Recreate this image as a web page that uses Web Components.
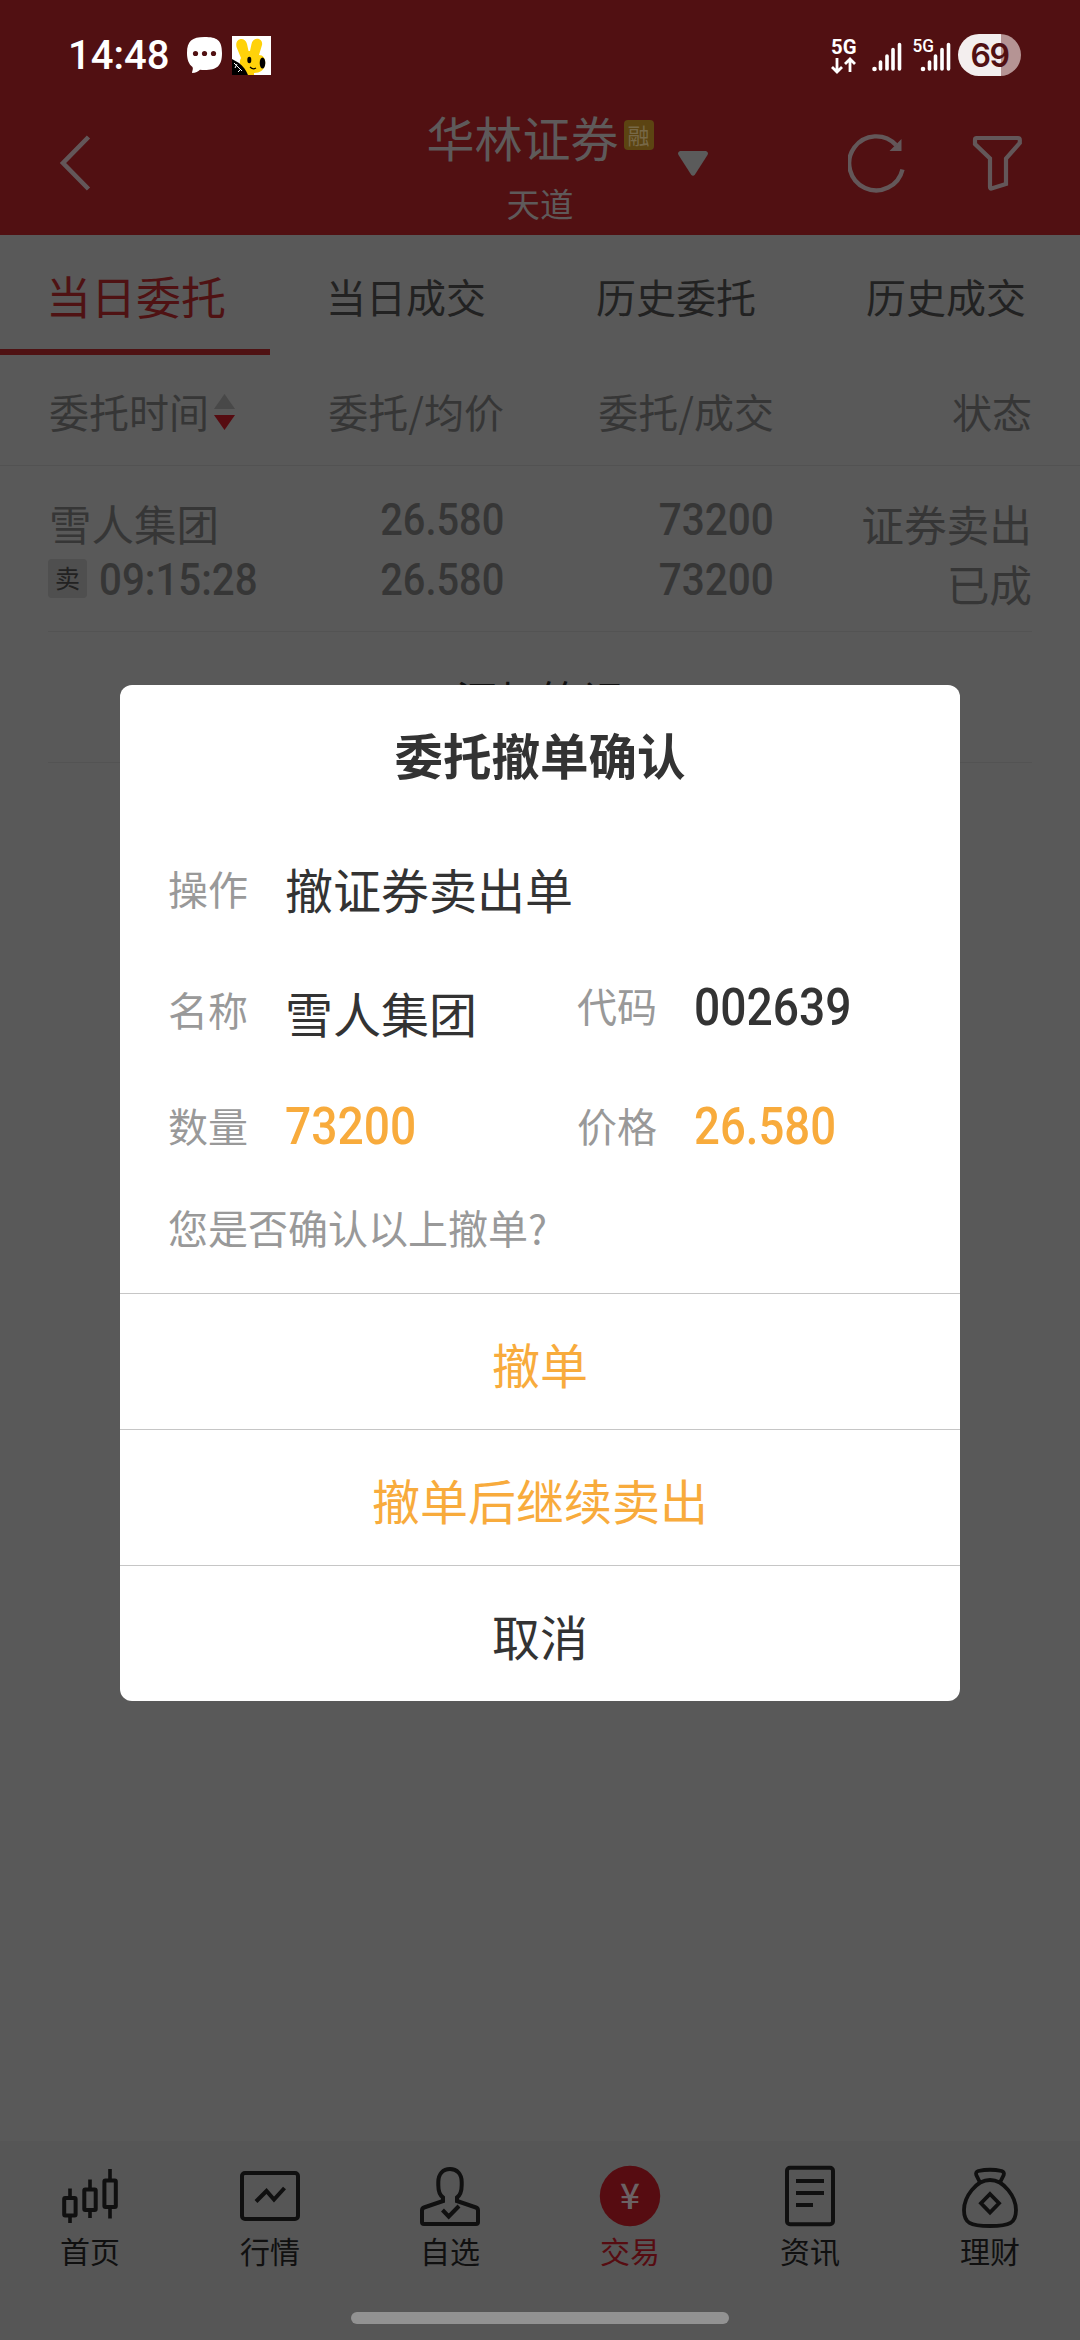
<!DOCTYPE html>
<html lang="zh-CN">
<head>
<meta charset="UTF-8">
<title>当日委托</title>
<style>
    body {
        margin: 0;
        width: 1080px;
        height: 2340px;
        overflow: hidden;
        background: #595959;
        font-family: "Noto Sans CJK SC", sans-serif;
    }
</style>
</head>
<body>
<trade-app></trade-app>

<script>
const ICONS = {
    home: `<g fill="none" stroke="currentColor" stroke-width="4"><rect x="6.2" y="33" width="11.4" height="17.5" rx="1"/><rect x="26.3" y="24.5" width="11.4" height="20.5" rx="1"/><rect x="46.4" y="15.5" width="11.4" height="26.5" rx="1"/><path d="M12 23.5v9M12 51v7M32 14.5v9M32 46v7M52 4v11M52 42v11.500" stroke-width="3.6"/></g>`,
    market: `<g fill="none" stroke="currentColor" stroke-width="4"><rect x="4" y="8" width="56" height="46" rx="3"/><path d="M18 36.500L28.500 26l7.500 8.500L46.500 23"/></g>`,
    user: `<path d="M25 37v-4.500C21.500 30 20.300 26.500 20.300 20v-3C20.300 9 25 4 32 4s11.700 5 11.700 13v3c0 6.500-1.200 10-4.700 12.500V37M26.500 35.500L6 42.500q-2 .7-2 3V57q0 2 2 2h52q2 0 2-2V45.500q0-2.300-2-3L37.500 35.500M24.500 45l6.200 6.500L41 41" fill="none" stroke="currentColor" stroke-width="4"/>`,
    trade: `<circle cx="32" cy="31" r="30.200" fill="currentColor"/><text x="32" y="44" text-anchor="middle" font-size="35" font-weight="500" fill="#6b6264" font-family="Noto Sans CJK SC">¥</text>`,
    news: `<g fill="none" stroke="currentColor" stroke-width="4"><rect x="9" y="2.800" width="46" height="56.500" rx="3"/><path d="M18 16h28M18 28h28M18 40h17"/></g>`,
    wealth: `<g fill="none" stroke="currentColor" stroke-width="3.800"><path d="M22 17.500L18.300 10q-1-3 2-4 11.700-2.500 23.400 0 3 1 2 4L42 17.500"/><path d="M32 15C18 15 6 32 6 45c0 13 6 16 26 16s26-3 26-16C58 32 46 15 32 15z"/><path d="M32 29l9 9.300-9 9.300-9-9.300z"/></g>`
};

class StatusBar extends HTMLElement {
    constructor() {
        super();
        this.attachShadow({mode: 'open'});
    }

    connectedCallback() {
        this.shadowRoot.innerHTML = `
        <style>
            :host {
                display: flex;
                justify-content: space-between;
                height: 80px;
                padding: 30px 59px 0 68px;
                box-sizing: border-box;
                background: #511012;
                color: #fff;
                font-family: Roboto, sans-serif;
            }

            .side {
                display: flex;
                align-items: center;
                height: 50px;
            }

            .time {
                font-size: 40px;
                font-weight: 500;
                line-height: 52px;
                padding-top: 1px;
                width: 118px;
            }

            .bunny {
                margin-left: 9px;
            }

            .battery {
                width: 63px;
                height: 42px;
                margin-left: 7px;
                border-radius: 21px;
                background: linear-gradient(90deg, #f3eeee 43px, #b59494 43px);
                color: #511012;
                font-family: Inter, sans-serif;
                font-size: 32px;
                font-weight: 600;
                line-height: 43px;
                letter-spacing: -1.500px;
                text-align: center;
            }
        </style>
        <div class="side">
            <span class="time">14:48</span>
            <svg width="37" height="38" viewBox="0 0 37 38">
                <path d="M18.500 1C6 1 1 5 1 17c0 6 1.500 11 5.500 14 1 2-.5 4-.5 6 4 0 6-1.500 8-3.300 1.500.3 3 .3 4.500.3C31 34 36 30 36 17S31 1 18.500 1z" fill="#fff"/>
                <g fill="#511012"><circle cx="9.500" cy="17.500" r="2.600"/><circle cx="18.500" cy="17.500" r="2.600"/><circle cx="27.500" cy="17.500" r="2.600"/></g>
            </svg>
            <svg class="bunny" width="39" height="39" viewBox="0 0 39 39">
                <path d="M0 0h39v39H0z" fill="#fff"/>
                <path d="M4.500 11C2.500 2 13 0 15 8l1.500 7h1.500L19.500 8c1.500-8 12-6 10.500 1l-3 10c5 0 7 5 6 10-1 5-5 8-11 8v2h-6C9 33 6 27 9 22z" fill="#ffd20a"/>
                <path d="M0 23l7 4c4 3 7 7 9 12H0z"/>
                <path d="M2 27l4 4M5 28l-2 4M6 31l4 4M9 33l-3 3" stroke="#fff" stroke-width="1"/>
                <ellipse cx="17.300" cy="24" rx="2" ry="3.300"/><ellipse cx="30.500" cy="27" rx="2.800" ry="5.500"/>
                <path d="M18 31q3 3 6 1" fill="none" stroke="#000" stroke-width="1.200"/>
            </svg>
        </div>
        <div class="side">
            <svg width="120" height="42" viewBox="830 34 120 42" fill="#fff" font-family="Roboto" font-weight="700">
                <text x="830" y="53.500" font-size="21" textLength="25.500" lengthAdjust="spacingAndGlyphs">5G</text>
                <path d="M836 58v13M831 67l5 5 5-5M849 72V59M844 64l5-5 5 5" fill="none" stroke="#fff" stroke-width="2.800"/>
                <circle cx="873.500" cy="69" r="2.300"/>
                <path d="M879.500 62v7M886 56v13M892 49.500v19.500M898.500 44.500v24.500" stroke="#fff" stroke-width="3.600" stroke-linecap="round"/>
                <text x="911.500" y="51.500" font-size="18" font-weight="500" textLength="21.500" lengthAdjust="spacingAndGlyphs">5G</text>
                <circle cx="922" cy="69" r="2.300"/>
                <path d="M928.500 62v7M934.500 56v13M941 49.500v19.500M947.500 44.500v24.500" stroke="#fff" stroke-width="3.600" stroke-linecap="round"/>
            </svg>
            <div class="battery">69</div>
        </div>
        `;
    }
}

class AppHeader extends HTMLElement {
    constructor() {
        super();
        this.attachShadow({mode: 'open'});
    }

    connectedCallback() {
        this.shadowRoot.innerHTML = `
        <style>
            :host {
                display: grid;
                grid-template-columns: 1fr auto 1fr;
                height: 155px;
                background: #511012;
                color: #5e5a5a;
            }

            svg {
                display: block;
            }

            .back, .tools {
                display: flex;
                align-items: center;
                padding-top: 11px;
            }

            .back {
                padding-left: 58px;
            }

            .middle {
                display: flex;
                flex-direction: column;
                align-items: center;
                gap: 10px;
                padding-top: 24px;
            }

            .title {
                display: flex;
                font-size: 48px;
                line-height: 65px;
            }

            .tag {
                width: 30px;
                height: 30px;
                margin: 16px 0 0 5px;
                border-radius: 4px;
                background: #5c4412;
                color: #776847;
                font-size: 22px;
                line-height: 28px;
                text-align: center;
            }

            .sub {
                font-size: 33.500px;
                line-height: 48px;
            }

            .tools {
                padding-left: 24px;
                color: #635759;
            }

            .refresh {
                margin-left: 140px;
            }

            .filter {
                margin-left: 64px;
            }
        </style>
        <div class="back">
            <svg width="34" height="56" viewBox="0 0 34 56"><path d="M30.500 2L5 28l25.500 26" fill="none" stroke="#635759" stroke-width="4.600"/></svg>
        </div>
        <div class="middle">
            <div class="title"><slot></slot><span class="tag">融</span></div>
            <div class="sub"><slot name="sub"></slot></div>
        </div>
        <div class="tools">
            <svg width="30" height="25" viewBox="0 0 30 25"><path d="M2 0h26q3 1 1.500 4L17 23.500q-2 2.500-4 0L.5 4Q-1 1 2 0z" fill="#5b5b5b"/></svg>
            <svg class="refresh" width="60" height="60" viewBox="0 0 60 60"><path d="M54.500 36.500A27 27 0 1 1 48 12" fill="none" stroke="currentColor" stroke-width="4.400"/><path d="M53.500 6V18H41.500z" fill="currentColor"/></svg>
            <svg class="filter" width="50" height="56" viewBox="0 0 50 56"><path d="M4 3h42q1.800 0 1.800 2v3L34 23.500V49L19.500 53.500q-1.500.3-1.500-1.500V23.500L3 9V5q0-2 1-2z" fill="none" stroke="currentColor" stroke-width="4.200"/></svg>
        </div>
        `;
    }
}

class TabItem extends HTMLElement {
    constructor() {
        super();
        this.attachShadow({mode: 'open'});
    }

    connectedCallback() {
        this.shadowRoot.innerHTML = `
        <style>
            :host {
                display: block;
                flex: 1;
                height: 120px;
                padding: 8px 0 0 2px;
                box-sizing: border-box;
                border-bottom: 6px solid transparent;
                color: #222;
                font-size: 40px;
                line-height: 106px;
                text-align: center;
            }

            :host([active]) {
                border-bottom-color: #4f1213;
                color: #4f1213;
                font-size: 45px;
            }
        </style>
        <slot></slot>
        `;
    }
}

// DIN-like narrow figures; grows from the left unless align="right"
class NumText extends HTMLElement {
    constructor() {
        super();
        this.attachShadow({mode: 'open'});
    }

    connectedCallback() {
        this.shadowRoot.innerHTML = `
        <style>
            :host {
                display: block;
                font-family: Roboto, sans-serif;
                font-weight: 500;
                white-space: nowrap;
            }

            span {
                display: inline-block;
                transform: scaleX(var(--narrow, .9));
                transform-origin: left;
            }

            :host([align="right"]) {
                text-align: right;
            }

            :host([align="right"]) span {
                transform-origin: right;
            }
        </style>
        <span><slot></slot></span>
        `;
    }
}

class OrderList extends HTMLElement {
    constructor() {
        super();
        this.attachShadow({mode: 'open'});
    }

    connectedCallback() {
        this.shadowRoot.innerHTML = `
        <style>
            :host {
                display: block;
                color: #363636;
            }

            .grid {
                display: grid;
                grid-template-columns: 216px 240px 270px 258px;
                padding: 0 48px;
                text-align: right;
            }

            .head {
                height: 110px;
                border-bottom: 1px solid #525252;
                font-size: 40px;
                line-height: 112px;
            }

            .time {
                display: flex;
                align-items: center;
                gap: 5px;
                padding-left: 1px;
            }

            .time svg {
                margin-top: 2px;
            }

            .row {
                height: 165px;
                font-size: 43px;
                line-height: 60px;
            }

            .cjk {
                padding-top: 27px;
            }

            .status {
                font-size: 42.700px;
            }

            .name {
                font-size: 42.500px;
                text-align: left;
                padding-left: 1px;
            }

            .num {
                --narrow: .9;
                padding-top: 24px;
                font-size: 45px;
            }

            .price {
                --narrow: .885;
            }

            .stamp {
                --narrow: .895;
                display: flex;
                align-items: center;
                gap: 12px;
                height: 54px;
                font-size: 45px;
            }

            .side {
                flex: none;
                width: 39px;
                height: 39px;
                margin-top: -4px;
                border-radius: 4px;
                background: #4f4f4f;
                color: #222;
                font-size: 25px;
                line-height: 37px;
                text-align: center;
            }

            .note {
                height: 130px;
                margin: 0 48px;
                border: solid #535353;
                border-width: 1px 0;
                color: #101010;
                font-size: 42px;
                line-height: 134px;
                text-align: center;
            }
        </style>
        <div class="grid head">
            <span class="time">委托时间
                <svg width="21" height="36" viewBox="0 0 21 36"><path d="M10.500 0L21 15H0z" fill="#484848"/><path d="M10.500 36L21 21H0z" fill="#560c11"/></svg>
            </span>
            <span>委托/均价</span>
            <span>委托/成交</span>
            <span>状态</span>
        </div>
        <div class="grid row">
            <div class="cjk">
                <div class="name">雪人集团</div>
                <div class="stamp"><span class="side">卖</span><num-text>09:15:28</num-text></div>
            </div>
            <div class="num price"><num-text align="right">26.580</num-text><num-text align="right">26.580</num-text></div>
            <div class="num"><num-text align="right">73200</num-text><num-text align="right">73200</num-text></div>
            <div class="cjk status">证券卖出<br>已成</div>
        </div>
        <div class="note">添加笔记</div>
        `;
    }
}

class NavItem extends HTMLElement {
    constructor() {
        super();
        this.attachShadow({mode: 'open'});
    }

    connectedCallback() {
        this.shadowRoot.innerHTML = `
        <style>
            :host {
                display: flex;
                flex: 1;
                flex-direction: column;
                align-items: center;
                color: #101010;
                font-size: 30px;
                line-height: 40px;
            }

            :host([active]) {
                color: #560c11;
            }

            svg {
                margin-bottom: 1px;
            }
        </style>
        <svg width="64" height="64" viewBox="0 0 64 64">${ICONS[this.getAttribute('icon')]}</svg>
        <slot></slot>
        `;
    }
}

class BottomNav extends HTMLElement {
    constructor() {
        super();
        this.attachShadow({mode: 'open'});
    }

    connectedCallback() {
        this.shadowRoot.innerHTML = `
        <style>
            :host {
                display: flex;
                flex-direction: column;
                align-items: center;
                height: 199px;
                background: #565656;
            }

            nav {
                display: flex;
                width: 100%;
                padding-top: 24px;
            }

            .home-bar {
                width: 378px;
                height: 12px;
                margin: auto 0 16px;
                border-radius: 6px;
                background: #929292;
            }
        </style>
        <nav>
            <nav-item icon="home">首页</nav-item>
            <nav-item icon="market">行情</nav-item>
            <nav-item icon="user">自选</nav-item>
            <nav-item icon="trade" active>交易</nav-item>
            <nav-item icon="news">资讯</nav-item>
            <nav-item icon="wealth">理财</nav-item>
        </nav>
        <div class="home-bar"></div>
        `;
    }
}

class ConfirmDialog extends HTMLElement {
    constructor() {
        super();
        this.attachShadow({mode: 'open'});
    }

    connectedCallback() {
        this.shadowRoot.innerHTML = `
        <style>
            :host {
                --narrow: .905;
                position: absolute;
                top: 685px;
                left: 120px;
                width: 840px;
                height: 1016px;
                border-radius: 12px;
                background: #fff;
                color: #333;
                overflow: hidden;
            }

            .title {
                padding-top: 34px;
                font-size: 48.500px;
                font-weight: 700;
                line-height: 70px;
                text-align: center;
            }

            .fields {
                display: grid;
                grid-template-columns: 117px 292px 117px 1fr;
                grid-template-rows: 121px 116px 112px;
                height: 440px;
                margin-top: 64px;
                padding-left: 48px;
                line-height: 70px;
                box-sizing: border-box;
            }

            .label, .ask {
                color: #999;
                font-size: 40px;
            }

            .value {
                font-size: 48px;
            }

            .wide {
                grid-column: span 3;
            }

            .low {
                padding-top: 3px;
            }

            .high {
                margin-top: -4px;
            }

            num-text {
                padding-top: 2px;
                font-size: 51px;
            }

            .high + num-text {
                margin-top: -3px;
            }

            .price {
                --narrow: .893;
            }

            .gold {
                color: #f8ab3c;
            }

            .ask {
                grid-column: span 4;
                line-height: 50px;
            }

            button {
                display: block;
                width: 100%;
                height: 136px;
                padding: 2px 0 0;
                border: 0;
                border-top: 1px solid #c6c6c6;
                background: none;
                color: #333;
                font: 48px/135px "Noto Sans CJK SC", sans-serif;
            }

            button.gold {
                color: #f8ab3c;
            }
        </style>
        <div class="title">委托撤单确认</div>
        <div class="fields">
            <span class="label">操作</span><span class="value wide">撤证券卖出单</span>
            <span class="label">名称</span><span class="value low">雪人集团</span>
            <span class="label high">代码</span><num-text>002639</num-text>
            <span class="label">数量</span><num-text class="gold">73200</num-text>
            <span class="label">价格</span><num-text class="gold price">26.580</num-text>
            <span class="ask">您是否确认以上撤单?</span>
        </div>
        <button class="gold">撤单</button>
        <button class="gold">撤单后继续卖出</button>
        <button>取消</button>
        `;
    }
}

class TradeApp extends HTMLElement {
    constructor() {
        super();
        this.attachShadow({mode: 'open'});
    }

    connectedCallback() {
        this.shadowRoot.innerHTML = `
        <style>
            :host {
                display: flex;
                flex-direction: column;
                position: relative;
                height: 2340px;
                background: #595959;
            }

            .tabs {
                display: flex;
            }

            order-list {
                flex: 1;
            }
        </style>
        <status-bar></status-bar>
        <app-header>华林证券<span slot="sub">天道</span></app-header>
        <div class="tabs">
            <tab-item active>当日委托</tab-item>
            <tab-item>当日成交</tab-item>
            <tab-item>历史委托</tab-item>
            <tab-item>历史成交</tab-item>
        </div>
        <order-list></order-list>
        <bottom-nav></bottom-nav>
        <confirm-dialog></confirm-dialog>
        `;
    }
}

customElements.define('status-bar', StatusBar);
customElements.define('app-header', AppHeader);
customElements.define('tab-item', TabItem);
customElements.define('num-text', NumText);
customElements.define('order-list', OrderList);
customElements.define('nav-item', NavItem);
customElements.define('bottom-nav', BottomNav);
customElements.define('confirm-dialog', ConfirmDialog);
customElements.define('trade-app', TradeApp);
</script>
</body>
</html>
